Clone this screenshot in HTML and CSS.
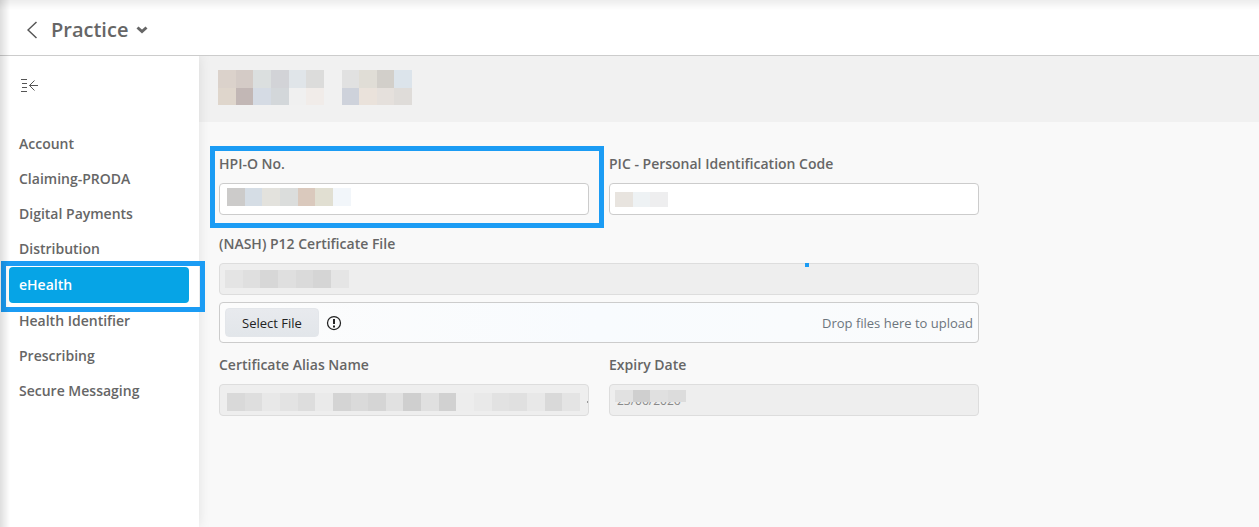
FILE: index.html
```
<!DOCTYPE html>
<html lang="en">
<head>
    <meta charset="UTF-8">
    <meta name="viewport" content="width=device-width, initial-scale=1.0">
    <title>Practice - eHealth</title>
    <link rel="stylesheet" href="styles.css">
</head>
<body>
<header class="header">
    <button type="button" class="back" aria-label="Back">
        <svg width="10" height="18" viewBox="0 0 10 18"><path d="M9.500 1 1 9l8.500 8"/></svg>
    </button>
    <button type="button" class="title">
        Practice
        <svg width="12" height="8" viewBox="0 0 12 8"><path d="m1.500 1.500 4.500 4 4.500-4"/></svg>
    </button>
</header>
<div class="layout">
    <aside class="sidebar">
        <button type="button" class="collapse" aria-label="Collapse menu">
            <svg width="17" height="14" viewBox="0 0 17 14"><path d="M0 .5h6M1 4.500h5M1 8.500h5M0 12.500h6M8.500 6.500H17M13.500 1.500l-5 5 5 5"/></svg>
        </button>
        <nav class="nav">
            <a href="#">Account</a>
            <a href="#">Claiming-PRODA</a>
            <a href="#">Digital Payments</a>
            <a href="#">Distribution</a>
            <a href="#" class="active">eHealth</a>
            <a href="#">Health Identifier</a>
            <a href="#">Prescribing</a>
            <a href="#">Secure Messaging</a>
        </nav>
    </aside>
    <main class="main">
        <div class="banner">
            <svg class="name" width="194" height="35" viewBox="0 0 194 35" shape-rendering="crispEdges">
                <path fill="#dbd2cb" d="M0 0h18v18H0z"/><path fill="#d4cbc6" d="M18 0h17v18H18z"/>
                <path fill="#dbdfdf" d="M35 0h18v18H35z"/><path fill="#d2d3d7" d="M53 0h18v18H53z"/>
                <path fill="#e0e5e9" d="M71 0h17v18H71z"/><path fill="#dcdcdb" d="M88 0h18v18H88z"/>
                <path fill="#dfd6cc" d="M0 18h18v17H0z"/><path fill="#c2b7b5" d="M18 18h17v17H18z"/>
                <path fill="#d5dbe4" d="M35 18h18v17H35z"/><path fill="#d3d7da" d="M53 18h18v17H53z"/>
                <path fill="#f0f0f0" d="M71 18h17v17H71z"/><path fill="#f1ece9" d="M88 18h18v17H88z"/>
                <path fill="#e1e1e1" d="M124 0h17v18h-17z"/><path fill="#e0ddd6" d="M141 0h18v18h-18z"/>
                <path fill="#d2cfca" d="M159 0h17v18h-17z"/><path fill="#dce4eb" d="M176 0h18v18h-18z"/>
                <path fill="#ced2db" d="M124 18h17v17h-17z"/><path fill="#eae2db" d="M141 18h18v17h-18z"/>
                <path fill="#e5e0dc" d="M159 18h17v17h-17z"/><path fill="#dfdcd9" d="M176 18h18v17h-18z"/>
            </svg>
        </div>
        <form class="form">
            <div class="field marked">
                <label for="hpio">HPI-O No.</label>
                <div class="control">
                    <input type="text" id="hpio">
                    <svg class="mask mask-hpio" width="124" height="18" viewBox="0 0 124 18" shape-rendering="crispEdges">
                        <path fill="#cccbca" d="M0 0h18v18H0z"/><path fill="#d5dde5" d="M18 0h17v18H18z"/>
                        <path fill="#e3e2dd" d="M35 0h18v18H35z"/><path fill="#dbdddc" d="M53 0h18v18H53z"/>
                        <path fill="#dac9bd" d="M71 0h17v18H71z"/><path fill="#e1dfd2" d="M88 0h18v18H88z"/>
                        <path fill="#f2f6fa" d="M106 0h18v18h-18z"/>
                    </svg>
                </div>
            </div>
            <div class="field">
                <label for="pic">PIC - Personal Identification Code</label>
                <div class="control">
                    <input type="text" id="pic">
                    <svg class="mask mask-pic" width="53" height="15" viewBox="0 0 53 15" shape-rendering="crispEdges">
                        <path fill="#e8e4df" d="M0 0h18v15H0z"/><path fill="#eef2f4" d="M18 0h17v15H18z"/>
                        <path fill="#eeeeef" d="M35 0h18v15H35z"/>
                    </svg>
                </div>
            </div>
            <div class="field wide">
                <label for="cert">(NASH) P12 Certificate File</label>
                <div class="control">
                    <input type="text" id="cert" disabled>
                    <svg class="mask mask-cert" width="124" height="18" viewBox="0 0 124 18" shape-rendering="crispEdges">
                        <path fill="#e4e4e4" d="M0 0h18v18H0z"/><path fill="#dfdfdf" d="M18 0h17v18H18z"/>
                        <path fill="#d7d7d7" d="M35 0h18v18H35z"/><path fill="#dfdfdf" d="M53 0h18v18H53z"/>
                        <path fill="#dadada" d="M71 0h17v18H71z"/><path fill="#d5d5d5" d="M88 0h18v18H88z"/>
                        <path fill="#e5e5e5" d="M106 0h18v18h-18z"/>
                    </svg>
                    <span class="dot"></span>
                </div>
                <div class="upload">
                    <button type="button" class="select">Select File</button>
                    <svg class="alert" width="16" height="16" viewBox="0 0 16 16">
                        <circle cx="8" cy="8" r="6.500"/><path d="M8 4v5M8 10.500v2"/>
                    </svg>
                    <span class="drop">Drop files here to upload</span>
                </div>
            </div>
            <div class="field">
                <label for="alias">Certificate Alias Name</label>
                <div class="control">
                    <input type="text" id="alias" disabled>
                    <svg class="mask mask-alias" width="362" height="18" viewBox="0 0 362 18" shape-rendering="crispEdges">
                        <path fill="#d9d9d9" d="M0 0h18v18H0z"/><path fill="#dedede" d="M18 0h17v18H18z"/>
                        <path fill="#e8e8e8" d="M35 0h18v18H35z"/><path fill="#e3e3e3" d="M53 0h18v18H53z"/>
                        <path fill="#dddddd" d="M71 0h17v18H71z"/><path fill="#eaeaea" d="M88 0h18v18H88z"/>
                        <path fill="#d4d4d4" d="M106 0h18v18h-18z"/><path fill="#dadada" d="M124 0h17v18h-17z"/>
                        <path fill="#d5d5d5" d="M141 0h18v18h-18z"/><path fill="#e1e1e1" d="M159 0h17v18h-17z"/>
                        <path fill="#cfcfcf" d="M176 0h18v18h-18z"/><path fill="#e0e0e0" d="M194 0h18v18h-18z"/>
                        <path fill="#d1d1d1" d="M212 0h17v18h-17z"/><path fill="#ededed" d="M229 0h18v18h-18z"/>
                        <path fill="#e9e9e9" d="M247 0h18v18h-18z"/><path fill="#e2e2e2" d="M265 0h17v18h-17z"/>
                        <path fill="#e0e0e0" d="M282 0h18v18h-18z"/><path fill="#e8e8e8" d="M300 0h18v18h-18z"/>
                        <path fill="#d9d9d9" d="M318 0h17v18h-17z"/><path fill="#e4e4e4" d="M335 0h18v18h-18z"/>
                        <path fill="#999" d="M360 8h1v2h-1z"/>
                    </svg>
                </div>
            </div>
            <div class="field">
                <label for="expiry">Expiry Date</label>
                <div class="control">
                    <input type="text" id="expiry" value="23/06/2026" disabled>
                    <svg class="mask mask-expiry" width="71" height="12" viewBox="0 0 71 12" shape-rendering="crispEdges">
                        <path fill="#e1e1e1" d="M0 0h18v12H0z"/><path fill="#cfcfcf" d="M18 0h17v12H18z"/>
                        <path fill="#e0e0e0" d="M35 0h18v12H35z"/><path fill="#dcdcdc" d="M53 0h18v12H53z"/>
                    </svg>
                </div>
            </div>
        </form>
    </main>
</div>
</body>
</html>
```
FILE: styles.css
```
*{
    box-sizing: border-box;
}
body{
    margin: 0;
    min-height: 100vh;
    display: flex;
    flex-direction: column;
    font-family: "Open Sans", "Noto Sans", sans-serif;
    font-size: 14px;
    line-height: 20px;
    color: #666;
    background: #f9f9f9;
}
/* soft shade along the top and left window edges */
body::after{
    content: "";
    position: fixed;
    inset: 0;
    pointer-events: none;
    background: linear-gradient(to right, rgba(0,0,0,.13), transparent 10px),
                linear-gradient(to bottom, rgba(0,0,0,.07), transparent 10px);
}
button{
    border: 0;
    padding: 0;
    background: none;
    color: inherit;
    font: inherit;
    cursor: pointer;
}
svg{
    display: block;
}
.header{
    display: flex;
    align-items: center;
    gap: 14px;
    height: 56px;
    padding: 4px 27px 0;
    background: #fff;
    border-bottom: 1px solid #ccc;
}
.back path,
.collapse path{
    fill: none;
    stroke: #555;
}
.title{
    display: flex;
    align-items: center;
    gap: 8px;
    font-size: 20px;
    line-height: 28px;
    font-weight: 600;
}
.title path{
    fill: none;
    stroke: #666;
    stroke-width: 3;
}
.back path{
    stroke-width: 1.500;
}
.layout{
    flex: 1;
    display: flex;
}
.sidebar{
    position: relative;
    width: 199px;
    padding: 23px 10px 0 9px;
    background: #fff;
    box-shadow: 0 0 12px rgba(0,0,0,.1);
    clip-path: inset(0 -14px 0 0);
}
.collapse{
    display: block;
    margin-left: 12px;
}
.nav{
    display: flex;
    flex-direction: column;
    margin-top: 34px;
}
.nav a{
    padding: 7px 10px 8px;
    color: #666;
    font-weight: 600;
    text-decoration: none;
}
.nav .active{
    position: relative;
    padding: 8px 10px;
    border-radius: 4px;
    color: #fff;
    background: #06a4e6;
}
.nav .active ~ a{
    padding: 8px 10px 7px;
}
.nav .active::after{
    content: "";
    position: absolute;
    inset: -6px -16px -9px -8px;
    border: 5px solid #1b9cf4;
}
.main{
    flex: 1;
}
.banner{
    height: 66px;
    padding: 14px 19px;
    background: #f1f1f1;
}
.form{
    display: grid;
    grid-template-columns: 1fr 1fr;
    column-gap: 20px;
    max-width: 800px;
    padding: 32px 20px;
}
.field{
    position: relative;
    padding-bottom: 19px;
}
.wide{
    grid-column: 1 / 3;
    padding-bottom: 12px;
}
.marked::after{
    content: "";
    position: absolute;
    inset: -8px -15px 6px -9px;
    border: 5px solid #1b9cf4;
    pointer-events: none;
}
.field label{
    display: block;
    margin-bottom: 9px;
    font-weight: 600;
}
.control{
    position: relative;
}
.control input{
    display: block;
    width: 100%;
    height: 32px;
    padding: 0 7px;
    border: 1px solid #ccc;
    border-radius: 4px;
    background: #fff;
    color: #666;
    font: 12px "Open Sans", "Noto Sans", sans-serif;
}
.control input:disabled{
    border-color: #ddd;
    background: #eee;
    color: #888;
}
/* blocks that hide private values */
.mask{
    position: absolute;
    left: 6px;
    top: 6px;
}
.mask-hpio{
    left: 8px;
    top: 5px;
}
.mask-pic{
    top: 9px;
}
.mask-cert{
    top: 7px;
}
.mask-alias{
    left: 8px;
    top: 9px;
}
.dot{
    position: absolute;
    left: 586px;
    top: 0;
    width: 4px;
    height: 4px;
    background: #1b9cf4;
}
.upload{
    display: flex;
    align-items: center;
    gap: 7px;
    margin-top: 7px;
    padding: 5px;
    border: 1px solid #ccc;
    border-radius: 4px;
    background: linear-gradient(to right, #fcfcfc, #f8fbfe 50%, #fafbfc);
    font-size: 13px;
}
.select{
    height: 29px;
    padding: 0 16px;
    border: 1px solid #e3e6ea;
    border-radius: 4px;
    background: linear-gradient(#e8eaee, #e2e6ea);
    color: #222;
}
.alert{
    fill: none;
    stroke: #222;
    stroke-width: 1.250;
}
.alert path{
    stroke-width: 2;
}
.drop{
    margin-left: auto;
    color: #6c757d;
}
```
